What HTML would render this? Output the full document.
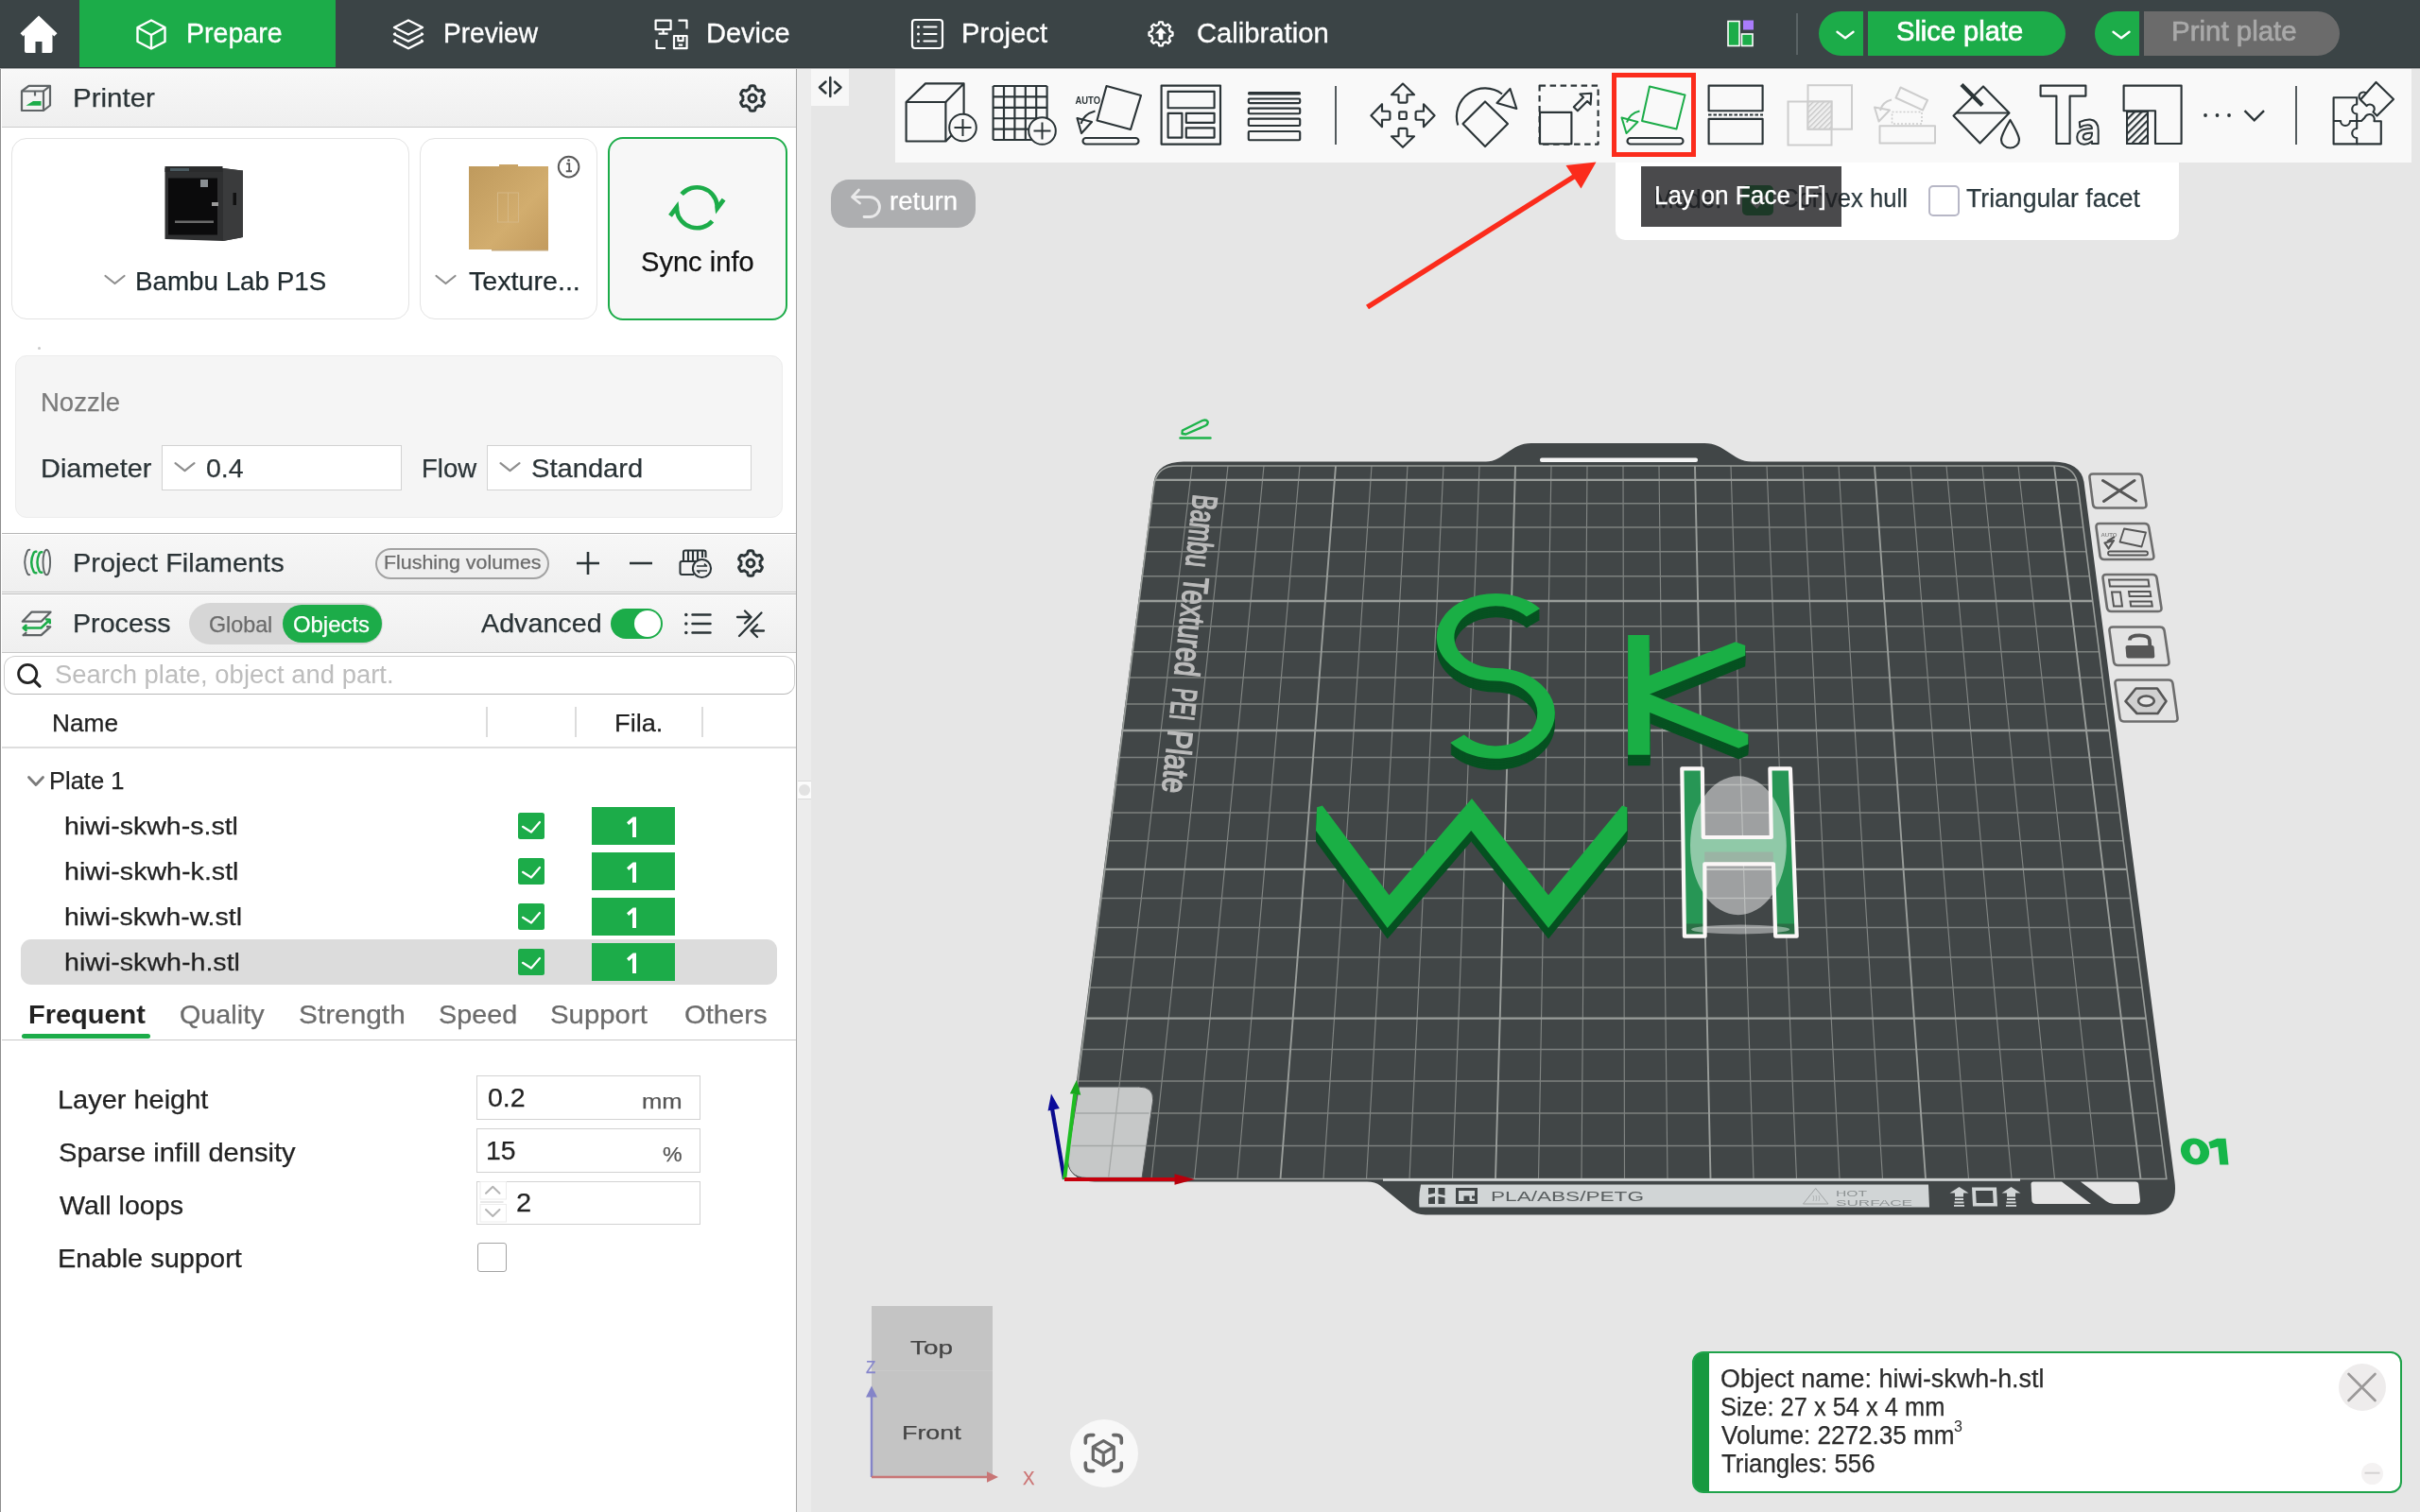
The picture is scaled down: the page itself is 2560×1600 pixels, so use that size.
<!DOCTYPE html>
<html><head><meta charset="utf-8"><title>Bambu Studio</title>
<style>
html,body{margin:0;padding:0;background:#e6e6e6;}
body{width:2560px;height:1600px;position:relative;overflow:hidden;font-family:"Liberation Sans",sans-serif;}
#root{position:absolute;left:0;top:0;width:2560px;height:1600px;overflow:hidden;will-change:transform;}
#root>div{position:absolute;box-sizing:border-box;}
#root>svg{position:absolute;overflow:visible;}
.t{white-space:nowrap;transform-origin:0 0;}
</style></head><body><div id="root">
<div style="left:858px;top:72px;width:1702px;height:1528px;background:#e6e6e6"></div>
<div style="left:843px;top:72px;width:15px;height:1528px;background:#ececec"></div>
<div style="left:947px;top:72px;width:1604px;height:100px;background:#f9f9f9"></div>
<div style="left:858px;top:72px;width:40px;height:40px;background:#f7f7f7"></div>
<div style="left:0px;top:0px;width:2560px;height:72px;background:#3b4446"></div>
<div style="left:84px;top:0px;width:271px;height:71px;background:#1cac49"></div>
<div style="left:1924px;top:12px;width:47px;height:47px;background:#1cac49;border-radius:24px 0 0 24px"></div>
<div style="left:1976px;top:12px;width:209px;height:47px;background:#1cac49;border-radius:0 24px 24px 0"></div>
<div style="left:2216px;top:12px;width:47px;height:47px;background:#1cac49;border-radius:24px 0 0 24px"></div>
<div style="left:2268px;top:12px;width:207px;height:47px;background:#6b6b6b;border-radius:0 24px 24px 0"></div>
<div style="left:1900px;top:14px;width:2px;height:44px;background:#5a6365"></div>
<div style="left:844px;top:826px;width:14px;height:20px;background:#fbfbfb;border-top:1px solid #dcdcdc;border-bottom:1px solid #dcdcdc"></div>
<div style="left:845px;top:830px;width:12px;height:12px;background:#e2e2e2;border-radius:6px"></div>
<div style="left:0px;top:71px;width:2560px;height:1px;background:#343c3e"></div>
<div style="left:0px;top:72px;width:843px;height:1528px;background:#fff"></div>
<div style="left:0px;top:72px;width:1px;height:1528px;background:#8e8e8e"></div>
<div style="left:842px;top:72px;width:1.2px;height:1528px;background:#a6a6a6"></div>
<div style="left:2px;top:72px;width:840px;height:62px;background:linear-gradient(#f8f8f8,#efefef)"></div>
<div style="left:2px;top:134px;width:840px;height:1.2px;background:#cdcdcd"></div>
<div style="left:0px;top:72px;width:2560px;height:1px;background:#a3a6a7"></div>
<div style="left:11.5px;top:145.5px;width:421px;height:192.5px;border:1.5px solid #e3e3e3;border-radius:16px;background:#fff"></div>
<div style="left:443.5px;top:145.5px;width:188.5px;height:192.5px;border:1.5px solid #e3e3e3;border-radius:16px;background:#fff"></div>
<div style="left:643px;top:145px;width:190px;height:194px;border:2px solid #1cac49;border-radius:16px;background:#f7f7f7"></div>
<div style="left:40px;top:367px;width:2.5px;height:2.5px;background:#c8c8c8;border-radius:2px"></div>
<div style="left:16px;top:376px;width:812px;height:171.5px;border:1px solid #ececec;border-radius:12px;background:#f5f5f5"></div>
<div style="left:171px;top:471px;width:254px;height:48px;border:1.5px solid #d2d2d2;background:#fff"></div>
<div style="left:515px;top:471px;width:280px;height:48px;border:1.5px solid #d2d2d2;background:#fff"></div>
<div style="left:2px;top:564px;width:840px;height:1.2px;background:#b6b6b6"></div>
<div style="left:2px;top:565.5px;width:840px;height:61px;background:linear-gradient(#f7f7f7,#efefef)"></div>
<div style="left:2px;top:626px;width:840px;height:1px;background:#c8c8c8"></div>
<div style="left:2px;top:628px;width:840px;height:1.2px;background:#b6b6b6"></div>
<div style="left:397px;top:579.5px;width:183.5px;height:33px;border:2px solid #a2a2a2;border-radius:18px;background:#efefef"></div>
<div style="left:2px;top:629.5px;width:840px;height:60px;background:linear-gradient(#f7f7f7,#efefef)"></div>
<div style="left:2px;top:689.5px;width:840px;height:1.5px;background:#c8c8c8"></div>
<div style="left:200px;top:638px;width:205px;height:43.5px;background:#d6d6d6;border-radius:22px"></div>
<div style="left:299px;top:640px;width:105px;height:40px;background:#1cac49;border-radius:20px"></div>
<div style="left:646px;top:644px;width:55px;height:32px;background:#1cac49;border-radius:16px"></div>
<div style="left:671px;top:646px;width:28px;height:28px;background:#fff;border-radius:14px"></div>
<div style="left:3.5px;top:693.5px;width:837px;height:41px;border:1.5px solid #d0d0d0;border-bottom-color:#b8b8b8;border-radius:12px;background:#fff"></div>
<div style="left:514.25px;top:748px;width:1.5px;height:31.5px;background:#dcdcdc"></div>
<div style="left:608.25px;top:748px;width:1.5px;height:31.5px;background:#dcdcdc"></div>
<div style="left:742.25px;top:748px;width:1.5px;height:31.5px;background:#dcdcdc"></div>
<div style="left:2px;top:790px;width:840px;height:1.5px;background:#dedede"></div>
<div style="left:22px;top:994px;width:800px;height:47.5px;background:#dcdcdc;border-radius:11px"></div>
<div style="left:548px;top:860px;width:28px;height:28px;background:#1cac49;border-radius:2.5px"></div>
<div style="left:626px;top:854px;width:88px;height:40px;background:#1cac49"></div>
<div style="left:548px;top:908px;width:28px;height:28px;background:#1cac49;border-radius:2.5px"></div>
<div style="left:626px;top:902px;width:88px;height:40px;background:#1cac49"></div>
<div style="left:548px;top:956px;width:28px;height:28px;background:#1cac49;border-radius:2.5px"></div>
<div style="left:626px;top:950px;width:88px;height:40px;background:#1cac49"></div>
<div style="left:548px;top:1004px;width:28px;height:28px;background:#1cac49;border-radius:2.5px"></div>
<div style="left:626px;top:998px;width:88px;height:40px;background:#1cac49"></div>
<div style="left:23px;top:1093.5px;width:136px;height:5.5px;background:#1cac49;border-radius:3px"></div>
<div style="left:2px;top:1099.5px;width:840px;height:1.5px;background:#c8c8c8"></div>
<div style="left:503.5px;top:1138px;width:237px;height:46.5px;border:1.5px solid #d2d2d2;background:#fff"></div>
<div style="left:503.5px;top:1194px;width:237px;height:46.5px;border:1.5px solid #d2d2d2;background:#fff"></div>
<div style="left:503.5px;top:1249.5px;width:237px;height:46.5px;border:1.5px solid #d2d2d2;background:#fff"></div>
<div style="left:504.5px;top:1314.5px;width:31px;height:31px;border:1.5px solid #a4a4a4;border-radius:3px;background:#fff"></div>
<div style="left:879px;top:190px;width:153px;height:51px;background:#adaeb0;border-radius:19px"></div>
<div style="left:1709px;top:172px;width:596px;height:82px;background:#fff;border-radius:0 0 10px 10px"></div>
<div style="left:1843px;top:196px;width:33px;height:32px;background:#1cac49;border-radius:5px"></div>
<div style="left:2039.5px;top:196px;width:33px;height:32.5px;border:2px solid #b7b7c6;border-radius:5px;background:#fff"></div>
<div style="left:1789.5px;top:1429.5px;width:751px;height:150px;border:2px solid #1fa34a;border-radius:12px;background:linear-gradient(90deg,#17993f 16.5px,#fff 16.5px)"></div>
<div style="left:2473.5px;top:1443px;width:50px;height:50px;background:#eeecec;border-radius:25px"></div>
<div style="left:2498px;top:1547.5px;width:23px;height:23px;background:#f4f2f2;border-radius:12px"></div>
<div style="left:922px;top:1381.5px;width:128px;height:181.5px;background:#c4c4c4"></div>
<div style="left:922px;top:1449.5px;width:128px;height:1px;background:#cacaca"></div>
<div style="left:1131.5px;top:1501.5px;width:72px;height:72px;background:#f8f8f8;border-radius:36px"></div>
<div style="left:1705px;top:77px;width:89px;height:88.5px;border:5px solid #fb2c1c"></div>
<svg width="2560" height="1600" viewBox="0 0 2560 1600" style="left:0;top:0">
<defs><clipPath id="gclip"><path d="M1245.0,493.0 L2173.8,493.0 Q2195.8,493.0 2198.3,515.0 L2291.8,1247.5 L1127.0,1247.5 L1220.5,515.0 Q1223.0,493.0 1245.0,493.0 Z"/></clipPath></defs>
<path d="M1252,488.5 L1572,488.5 C1590,488.5 1598,469 1620,469 L1803,469 C1825,469 1833,488.5 1853,488.5 L2172,488.5 Q2201,489 2204.5,510 L2300.5,1250 Q2305,1285.5 2270,1285.5 L1508,1285.5 Q1498,1285.5 1490,1279 L1460,1254.5 Q1455,1250.5 1446,1250.5 L1158,1250.5 Q1129,1250.5 1128.8,1222 L1220.5,510 Q1224,489 1252,488.5 Z" fill="#414647"/>
<rect x="1629" y="484.5" width="167" height="4.5" rx="2" fill="#f4f4f4"/>
<g clip-path="url(#gclip)" fill="none"><path d="M1172.5,1247.5L1261.0,493.0M1218.0,1247.5L1299.0,493.0M1263.5,1247.5L1337.0,493.0M1309.0,1247.5L1375.0,493.0M1400.0,1247.5L1451.0,493.0M1445.5,1247.5L1489.0,493.0M1491.0,1247.5L1527.0,493.0M1536.5,1247.5L1565.0,493.0M1627.5,1247.5L1641.0,493.0M1673.0,1247.5L1679.0,493.0M1718.5,1247.5L1717.0,493.0M1764.0,1247.5L1755.0,493.0M1855.0,1247.5L1831.0,493.0M1900.5,1247.5L1869.0,493.0M1946.0,1247.5L1907.0,493.0M1991.5,1247.5L1945.0,493.0M2082.5,1247.5L2021.0,493.0M2128.0,1247.5L2059.0,493.0M2173.5,1247.5L2097.0,493.0M2219.0,1247.5L2135.0,493.0" stroke="#818583" stroke-width="1.15"/><path d="M1131.5,1212.5L2287.3,1212.5M1135.8,1178.0L2283.0,1178.0M1140.2,1144.0L2278.6,1144.0M1144.4,1110.6L2274.4,1110.6M1152.8,1045.1L2266.0,1045.1M1156.8,1013.1L2262.0,1013.1M1160.8,981.6L2258.0,981.6M1164.8,950.5L2254.0,950.5M1172.5,889.7L2246.3,889.7M1176.3,859.9L2242.5,859.9M1180.1,830.5L2238.7,830.5M1183.7,801.6L2235.1,801.6M1191.0,744.9L2227.8,744.9M1194.5,717.1L2224.3,717.1M1198.0,689.7L2220.8,689.7M1201.4,662.7L2217.4,662.7M1208.2,609.7L2210.6,609.7M1211.5,583.7L2207.3,583.7M1214.7,558.1L2204.1,558.1M1217.9,532.8L2200.9,532.8" stroke="#7d817f" stroke-width="1.5"/><path d="M1354.5,1247.5L1413.0,493.0M1582.0,1247.5L1603.0,493.0M1809.5,1247.5L1793.0,493.0M2037.0,1247.5L1983.0,493.0M2264.5,1247.5L2173.0,493.0" stroke="#999d9a" stroke-width="1.9"/><path d="M1148.6,1077.6L2270.2,1077.6M1168.7,919.9L2250.1,919.9M1187.4,773.0L2231.4,773.0M1204.8,636.0L2214.0,636.0M1221.1,507.9L2197.7,507.9" stroke="#999d9a" stroke-width="2.3"/></g>
<path d="M1245.0,493.0 L2173.8,493.0 Q2195.8,493.0 2198.3,515.0 L2291.8,1247.5 L1127.0,1247.5 L1220.5,515.0 Q1223.0,493.0 1245.0,493.0 Z" fill="none" stroke="#9a9e9b" stroke-width="1.6"/>
<rect x="1463" y="1247.2" width="674" height="2.6" fill="#d4d7d7"/>
<path d="M1149.2,1246.3 L1208.1,1246.3 L1219.7,1164.1 Q1220.2,1150.1 1204.7,1150.1 L1141.4,1150.1 L1129.2,1224.3 Q1129.2,1246.3 1149.2,1246.3 Z" fill="#c6c8c8" stroke="#55595a" stroke-width="1"/><path d="M1133.5,1212.5L1211.8,1212.5M1137.9,1178.0L1215.6,1178.0M1172.7,1245.7L1183.9,1150.1" stroke="#a4a7a6" stroke-width="1.3" fill="none"/>
<path d="M1503,1253.5 L2040,1253.5 L2041,1277.5 L1501.5,1277.5 Q1500.5,1265 1503,1253.5 Z" fill="#d1d5d6"/>
<g fill="#414647"><path d="M1511,1257 h7 v5.5 l-7,1.5 z M1521.5,1257 h7 v8 l-7,-1.5 z M1511,1267.5 l7,-1.5 v8 h-7 z M1521.5,1266 l7,1.5 v6.5 h-7 z"/><path d="M1540,1257 h23 v17 h-23 z M1543,1260 v11 h5.5 v-5.5 h6 v5.5 h5.5 v-2.5 h-3 v-3 h3 v-5.5 z" fill-rule="evenodd"/></g><text x="1577" y="1271.2" font-family="Liberation Sans,sans-serif" font-size="14.5" fill="#5a5f60" textLength="162" lengthAdjust="spacingAndGlyphs">PLA/ABS/PETG</text>
<path d="M1920.7,1257.5 L1934,1274 L1907.5,1274 Z" fill="none" stroke="#a0a4a5" stroke-width="1"/><path d="M1918,1271 q1.5,-3 0,-6 M1921,1271 q1.5,-3 0,-6 M1924,1271 q1.5,-3 0,-6" fill="none" stroke="#a8acad" stroke-width="0.8"/><text x="1942" y="1265.5" font-family="Liberation Sans,sans-serif" font-size="9.5" fill="#8d9293" textLength="33" lengthAdjust="spacingAndGlyphs">HOT</text><text x="1942" y="1275.5" font-family="Liberation Sans,sans-serif" font-size="9.5" fill="#8d9293" textLength="81" lengthAdjust="spacingAndGlyphs">SURFACE</text>
<g fill="#d1d5d6"><path d="M2072.5,1256 l10,6.5 h-5.5 v4 h-9 v-4 h-5.5 z"/><rect x="2068.0" y="1268" width="9" height="2"/><rect x="2067.5" y="1271.5" width="10" height="2"/><rect x="2067.0" y="1275" width="11" height="1.8"/><path d="M2127.5,1256 l10,6.5 h-5.5 v4 h-9 v-4 h-5.5 z"/><rect x="2123.0" y="1268" width="9" height="2"/><rect x="2122.5" y="1271.5" width="10" height="2"/><rect x="2122.0" y="1275" width="11" height="1.8"/><path d="M2086,1256.5 h26 l1,20 h-26 z M2090,1260 l0.7,13 h18 l-0.7,-13 z" fill-rule="evenodd"/></g>
<path d="M2151,1250.5 L2181,1250.5 L2212,1274 L2154,1274 Q2149.5,1274 2149.3,1270 L2148.5,1253 Q2148.5,1250.5 2151,1250.5 Z" fill="#e6e6e6"/><path d="M2201,1250.5 L2259,1250.5 Q2262,1250.5 2262.3,1253 L2264,1270 Q2264,1274 2260,1274 L2236,1274 Q2231,1273.5 2228,1271 Z" fill="#e6e6e6"/>
<g transform="translate(1262.5,522) rotate(96.0)" font-family="Liberation Sans,sans-serif" font-size="37" fill="#bbbbbb" stroke="#bbbbbb" stroke-width="1.5"><text x="0.6" y="0" textLength="76.6" lengthAdjust="spacingAndGlyphs">Bambu</text><text x="88.0" y="0" textLength="105.4" lengthAdjust="spacingAndGlyphs">Textured</text><text x="206.5" y="0" textLength="33.5" lengthAdjust="spacingAndGlyphs">PEI</text><text x="250.8" y="0" textLength="67.1" lengthAdjust="spacingAndGlyphs">Plate</text></g>
<g transform="translate(0,12) scale(1,0.72)"><path d="M1622,900.3 A53,54.9 0 1 0 1582,991.3 A53.5,57.2 0 1 1 1541.5,1085.8" fill="none" stroke="#065121" stroke-width="18.6"/></g><g transform="translate(0,10) scale(1,0.72)"><path d="M1622,900.3 A53,54.9 0 1 0 1582,991.3 A53.5,57.2 0 1 1 1541.5,1085.8" fill="none" stroke="#065121" stroke-width="18.6"/></g><g transform="translate(0,8) scale(1,0.72)"><path d="M1622,900.3 A53,54.9 0 1 0 1582,991.3 A53.5,57.2 0 1 1 1541.5,1085.8" fill="none" stroke="#065121" stroke-width="18.6"/></g><g transform="translate(0,6) scale(1,0.72)"><path d="M1622,900.3 A53,54.9 0 1 0 1582,991.3 A53.5,57.2 0 1 1 1541.5,1085.8" fill="none" stroke="#065121" stroke-width="18.6"/></g><g transform="translate(0,4) scale(1,0.72)"><path d="M1622,900.3 A53,54.9 0 1 0 1582,991.3 A53.5,57.2 0 1 1 1541.5,1085.8" fill="none" stroke="#065121" stroke-width="18.6"/></g><g transform="translate(0,2) scale(1,0.72)"><path d="M1622,900.3 A53,54.9 0 1 0 1582,991.3 A53.5,57.2 0 1 1 1541.5,1085.8" fill="none" stroke="#065121" stroke-width="18.6"/></g><g transform="translate(0,0) scale(1,0.72)"><path d="M1622,900.3 A53,54.9 0 1 0 1582,991.3 A53.5,57.2 0 1 1 1541.5,1085.8" fill="none" stroke="#1aaf45" stroke-width="18.6"/></g>
<polygon points="1722.1,683.6 1744.7,683.6 1745.5,810.3 1722.1,810.3" fill="#065121" /><polygon points="1744.0,726.8 1835.8,690.9 1846.2,694.6 1846.2,705.3 1744.0,746.6" fill="#065121" /><polygon points="1744.0,745.6 1849.3,788.6 1849.3,799.0 1839.2,803.4 1744.0,765.2" fill="#065121" /><polygon points="1722.1,681.6 1744.7,681.6 1745.5,808.3 1722.1,808.3" fill="#065121" /><polygon points="1744.0,724.8 1835.8,688.9 1846.2,692.6 1846.2,703.3 1744.0,744.6" fill="#065121" /><polygon points="1744.0,743.6 1849.3,786.6 1849.3,797.0 1839.2,801.4 1744.0,763.2" fill="#065121" /><polygon points="1722.1,679.6 1744.7,679.6 1745.5,806.3 1722.1,806.3" fill="#065121" /><polygon points="1744.0,722.8 1835.8,686.9 1846.2,690.6 1846.2,701.3 1744.0,742.6" fill="#065121" /><polygon points="1744.0,741.6 1849.3,784.6 1849.3,795.0 1839.2,799.4 1744.0,761.2" fill="#065121" /><polygon points="1722.1,677.6 1744.7,677.6 1745.5,804.3 1722.1,804.3" fill="#065121" /><polygon points="1744.0,720.8 1835.8,684.9 1846.2,688.6 1846.2,699.3 1744.0,740.6" fill="#065121" /><polygon points="1744.0,739.6 1849.3,782.6 1849.3,793.0 1839.2,797.4 1744.0,759.2" fill="#065121" /><polygon points="1722.1,675.6 1744.7,675.6 1745.5,802.3 1722.1,802.3" fill="#065121" /><polygon points="1744.0,718.8 1835.8,682.9 1846.2,686.6 1846.2,697.3 1744.0,738.6" fill="#065121" /><polygon points="1744.0,737.6 1849.3,780.6 1849.3,791.0 1839.2,795.4 1744.0,757.2" fill="#065121" /><polygon points="1722.1,673.6 1744.7,673.6 1745.5,800.3 1722.1,800.3" fill="#065121" /><polygon points="1744.0,716.8 1835.8,680.9 1846.2,684.6 1846.2,695.3 1744.0,736.6" fill="#065121" /><polygon points="1744.0,735.6 1849.3,778.6 1849.3,789.0 1839.2,793.4 1744.0,755.2" fill="#065121" /><polygon points="1722.1,672.0 1744.7,672.0 1745.5,798.7 1722.1,798.7" fill="#1aaf45" /><polygon points="1744.0,715.2 1835.8,679.3 1846.2,683.0 1846.2,693.7 1744.0,735.0" fill="#1aaf45" /><polygon points="1744.0,734.0 1849.3,777.0 1849.3,787.4 1839.2,791.8 1744.0,753.6" fill="#1aaf45" />
<polygon points="1393.1,865.8 1398.9,864.0 1469.5,958.9 1557.0,856.6 1638.0,958.9 1716.0,864.0 1721.3,865.8 1721.3,890.6 1638.0,993.6 1556.3,890.6 1467.7,993.6 1392.0,890.6" fill="#065121" /><polygon points="1393.1,863.8 1398.9,862.0 1469.5,956.9 1557.0,854.6 1638.0,956.9 1716.0,862.0 1721.3,863.8 1721.3,888.6 1638.0,991.6 1556.3,888.6 1467.7,991.6 1392.0,888.6" fill="#065121" /><polygon points="1393.1,861.8 1398.9,860.0 1469.5,954.9 1557.0,852.6 1638.0,954.9 1716.0,860.0 1721.3,861.8 1721.3,886.6 1638.0,989.6 1556.3,886.6 1467.7,989.6 1392.0,886.6" fill="#065121" /><polygon points="1393.1,859.8 1398.9,858.0 1469.5,952.9 1557.0,850.6 1638.0,952.9 1716.0,858.0 1721.3,859.8 1721.3,884.6 1638.0,987.6 1556.3,884.6 1467.7,987.6 1392.0,884.6" fill="#065121" /><polygon points="1393.1,857.8 1398.9,856.0 1469.5,950.9 1557.0,848.6 1638.0,950.9 1716.0,856.0 1721.3,857.8 1721.3,882.6 1638.0,985.6 1556.3,882.6 1467.7,985.6 1392.0,882.6" fill="#065121" /><polygon points="1393.1,855.8 1398.9,854.0 1469.5,948.9 1557.0,846.6 1638.0,948.9 1716.0,854.0 1721.3,855.8 1721.3,880.6 1638.0,983.6 1556.3,880.6 1467.7,983.6 1392.0,880.6" fill="#065121" /><polygon points="1393.1,854.2 1398.9,852.4 1469.5,947.3 1557.0,845.0 1638.0,947.3 1716.0,852.4 1721.3,854.2 1721.3,879.0 1638.0,982.0 1556.3,879.0 1467.7,982.0 1392.0,879.0" fill="#1aaf45" />
<polygon points="1779.3,813.3 1800.8,813.3 1801.8,886.0 1873.8,886.0 1872.4,813.3 1893.9,813.3 1900.7,990.7 1878.2,990.7 1876.0,914.4 1803.3,914.4 1803.6,990.7 1781.9,990.7" fill="#279655"/><polygon points="1803.2,901.5 1875.6,901.5 1876,914.4 1803.3,914.4" fill="#3a6c4e"/><polygon points="1781.7,977.6 1803.6,977.6 1803.6,990.7 1781.9,990.7" fill="#2a6f45"/><polygon points="1877.8,977.6 1900.2,977.6 1900.7,990.7 1878.2,990.7" fill="#2a6f45"/><ellipse cx="1838.9" cy="894.7" rx="50.9" ry="73.5" fill="rgba(255,255,255,0.49)"/><ellipse cx="1841.1" cy="983.5" rx="52" ry="4.9" fill="rgba(255,255,255,0.42)"/><polygon points="1779.3,813.3 1800.8,813.3 1801.8,886.0 1873.8,886.0 1872.4,813.3 1893.9,813.3 1900.7,990.7 1878.2,990.7 1876.0,914.4 1803.3,914.4 1803.6,990.7 1781.9,990.7" fill="none" stroke="#fbf7f7" stroke-width="4.2" stroke-linejoin="round"/>
<g stroke-linecap="butt"><line x1="1126" y1="1248" x2="1112.8" y2="1172" stroke="#0b0b8e" stroke-width="4.2"/><polygon points="1112,1157.5 1120.8,1173 1108.5,1175.5" fill="#0b0b9a"/><line x1="1126" y1="1248" x2="1137.2" y2="1158" stroke="#1fbe22" stroke-width="4.2"/><polygon points="1138.9,1143 1143.3,1158.8 1131.8,1157.3" fill="#18a81c"/><line x1="1126" y1="1248" x2="1244" y2="1248" stroke="#c6000c" stroke-width="4.2"/><polygon points="1264,1248 1242.5,1242.3 1242.5,1253.7" fill="#b8000c"/></g>
<g fill="#16b64a" transform="translate(2332,1218.5) skewX(6) translate(-2332,-1218.5)"><path fill-rule="evenodd" d="M2307,1218.5 A15,14 0 1 0 2337,1218.5 A15,14 0 1 0 2307,1218.5 Z M2316.5,1218.5 A5.5,7.7 0 1 1 2327.5,1218.5 A5.5,7.7 0 1 1 2316.5,1218.5 Z"/><path d="M2346.8,1204.8 H2356 V1232.4 H2346.8 V1213.4 L2338.6,1215.6 L2337.4,1208.6 Z"/></g>
<g fill="none" stroke="#1cb34a" stroke-width="2.4" stroke-linecap="round" stroke-linejoin="round"><path d="M1250.5,459 L1250.8,455.5 L1272,445 Q1276,443.5 1277.5,446 Q1278.5,448.5 1275,450.5 L1254.5,459.5 Z"/><path d="M1248.5,463.5 H1280.5"/></g>
</svg>
<svg width="2560" height="1600" viewBox="0 0 2560 1600" style="left:0;top:0">
<path d="M873.5,86.5 L867,92.5 L873.5,98.5 M878.3,82 V102  M883,86.5 L889.5,92.5 L883,98.5" fill="none" stroke="#2b3437" stroke-width="2.5" stroke-linejoin="round" stroke-linecap="round"/><g fill="none" stroke="#2b3437" stroke-width="2.15" stroke-linejoin="round"><rect x="958.6" y="108" width="41.8" height="41.5"/><path d="M958.6,108 L979,88.4 H1019.6 L1000.4,108 M1019.6,88.4 V130 M1000.4,149.5 L1019.6,130"/></g><circle cx="1018.5" cy="135" r="14.3" fill="#f9f9f9" stroke="#2b3437" stroke-width="2"/><path d="M1009.5,135 H1027.5 M1018.5,126 V144" stroke="#2b3437" stroke-width="2" fill="none"/><path d="M1050.6,91 V148M1050.6,91.0 H1107.6M1062.0,91 V148M1050.6,102.4 H1107.6M1073.4,91 V148M1050.6,113.8 H1107.6M1084.8,91 V148M1050.6,125.2 H1107.6M1096.2,91 V148M1050.6,136.6 H1107.6M1107.6,91 V148M1050.6,148.0 H1107.6" fill="none" stroke="#2b3437" stroke-width="2.15" stroke-linejoin="round"/><circle cx="1102.5" cy="138.5" r="14.3" fill="#f9f9f9" stroke="#2b3437" stroke-width="2"/><path d="M1093.5,138.5 H1111.5 M1102.5,129.5 V147.5" stroke="#2b3437" stroke-width="2" fill="none"/><g fill="none" stroke="#2b3437" stroke-width="2.15" stroke-linejoin="round"><path d="M1170.5,91 L1207,101 L1196,137 L1160.5,127.5 Z"/><path d="M1158.5,117.5 Q1146,121 1143.5,131"/><path d="M1139.5,125 L1155,129 L1144,141 Z"/><rect x="1145.5" y="146" width="59" height="6.5" rx="3.2"/></g><text x="1137.5" y="109.5" font-family="Liberation Sans,sans-serif" font-weight="bold" font-size="11.5" fill="#2b3437" textLength="26.5" lengthAdjust="spacingAndGlyphs">AUTO</text><g fill="none" stroke="#2b3437" stroke-width="2.15" stroke-linejoin="round"><rect x="1228.6" y="90.6" width="62.4" height="62"/><rect x="1235.6" y="96.8" width="49" height="17.4"/><rect x="1235.6" y="119.8" width="14.8" height="25.8"/><rect x="1254.8" y="119.8" width="29.8" height="10"/><rect x="1254.8" y="135.4" width="29.8" height="10.2"/></g><rect x="1320" y="97" width="56" height="3.6" rx="1.5" fill="#2b3437"/><g fill="none" stroke="#2b3437" stroke-width="2.15" stroke-linejoin="round"><rect x="1320.8" y="104.5" width="54.4" height="4.6" rx="1"/><rect x="1320.8" y="114.6" width="54.4" height="5.6" rx="1"/><rect x="1320.8" y="125.6" width="54.4" height="7.4" rx="1"/><rect x="1320.8" y="139" width="54.4" height="9.2" rx="1"/></g><path d="M1413,91 V153 M2429,91 V153" stroke="#2b3437" stroke-width="1.6"/><path d="M1484,88.6 L1496,100.2 L1488.5,100.2 L1488.5,107 Q1488.5,108.6 1487,108.6 L1481,108.6 Q1479.5,108.6 1479.5,107 L1479.5,100.2 L1472,100.2 Z" transform="rotate(0 1484 122.2)" fill="none" stroke="#2b3437" stroke-width="2.15" stroke-linejoin="round"/><path d="M1484,88.6 L1496,100.2 L1488.5,100.2 L1488.5,107 Q1488.5,108.6 1487,108.6 L1481,108.6 Q1479.5,108.6 1479.5,107 L1479.5,100.2 L1472,100.2 Z" transform="rotate(90 1484 122.2)" fill="none" stroke="#2b3437" stroke-width="2.15" stroke-linejoin="round"/><path d="M1484,88.6 L1496,100.2 L1488.5,100.2 L1488.5,107 Q1488.5,108.6 1487,108.6 L1481,108.6 Q1479.5,108.6 1479.5,107 L1479.5,100.2 L1472,100.2 Z" transform="rotate(180 1484 122.2)" fill="none" stroke="#2b3437" stroke-width="2.15" stroke-linejoin="round"/><path d="M1484,88.6 L1496,100.2 L1488.5,100.2 L1488.5,107 Q1488.5,108.6 1487,108.6 L1481,108.6 Q1479.5,108.6 1479.5,107 L1479.5,100.2 L1472,100.2 Z" transform="rotate(270 1484 122.2)" fill="none" stroke="#2b3437" stroke-width="2.15" stroke-linejoin="round"/><rect x="1480.2" y="118.4" width="7.6" height="7.6" rx="1" fill="none" stroke="#2b3437" stroke-width="2.15" stroke-linejoin="round"/><g fill="none" stroke="#2b3437" stroke-width="2.15" stroke-linejoin="round"><path d="M1571,107.5 L1595,131 L1571,155 L1547.5,131 Z"/><path d="M1542.3,132.5 A30,30 0 0 1 1589,99.5"/><path d="M1597.5,94 L1604.3,115 L1583.5,109 Z"/></g><g fill="none" stroke="#2b3437" stroke-width="2.15" stroke-linejoin="round"><rect x="1628.6" y="90.6" width="62" height="62" stroke-dasharray="6.5 4.5"/><rect x="1629" y="118.8" width="33.4" height="33.4" fill="#f9f9f9"/><path d="M1664.8,113.2 L1675,103 L1671.5,99.5 L1683.3,98.8 L1682.6,110.6 L1679.1,107.1 L1668.9,117.3 Z"/></g><g fill="none" stroke="#1cac49" stroke-width="2" stroke-linejoin="round"><path d="M1745,91.5 L1782.5,100.5 L1773.5,136.5 L1737,128 Z"/><path d="M1734.5,117.5 Q1724,120 1721,129.5"/><path d="M1715.5,124.5 L1732.5,129 L1720.5,141 Z"/></g><rect x="1721.5" y="146" width="59" height="6.5" rx="3.2" fill="none" stroke="#2b3437" stroke-width="2.15" stroke-linejoin="round"/><g fill="none" stroke="#2b3437" stroke-width="2.15" stroke-linejoin="round"><rect x="1807.6" y="90.6" width="57" height="26.6"/><rect x="1807.6" y="125.8" width="57" height="26.4"/><path d="M1807,121.5 H1865" stroke-dasharray="3.5 2"/></g><defs><pattern id="h1" width="4" height="4" patternUnits="userSpaceOnUse" patternTransform="rotate(45)"><rect width="4" height="4" fill="#f0f0f0"/><rect width="1.3" height="4" fill="#c4c4c4"/></pattern><pattern id="h2" width="5.4" height="5.4" patternUnits="userSpaceOnUse" patternTransform="rotate(45)"><rect width="5.4" height="5.4" fill="#f9f9f9"/><rect width="2.1" height="5.4" fill="#2b3437"/></pattern><linearGradient id="pg" x1="0" y1="0" x2="1" y2="1"><stop offset="0" stop-color="#bf9a5d"/><stop offset="0.6" stop-color="#d2ad6e"/><stop offset="1" stop-color="#c39b5e"/></linearGradient></defs><g fill="none" stroke="#cdcdcd" stroke-width="2"><rect x="1912.5" y="90.2" width="46.5" height="46.5"/><rect x="1891.5" y="107.5" width="46" height="46"/><rect x="1912.5" y="107.5" width="25" height="29.2" fill="url(#h1)"/></g><g fill="none" stroke="#cdcdcd" stroke-width="2" stroke-linejoin="round"><rect x="1988.5" y="133.2" width="58.5" height="18.3"/><rect x="2001.5" y="118.5" width="31.5" height="12.5" stroke-dasharray="2 2" stroke-width="1.6"/><path d="M2010.5,92.5 L2039,106 L2034,116.5 L2005.5,103.5 Z"/><path d="M2001,105.5 Q1991,108 1989,117"/><path d="M1983,113.5 L1999,116.5 L1987.5,128.5 Z"/></g><g fill="none" stroke="#2b3437" stroke-width="2.15" stroke-linejoin="round"><path d="M2098,91.5 L2125.5,119.5 L2094.5,151.5 L2066.5,122.5 Z"/><path d="M2069.5,119.5 H2125.5"/><path d="M2126.5,127 Q2117,143 2117,148 A9.5,8.5 0 0 0 2136,148 Q2136,143 2126.5,127 Z"/></g><path d="M2075,89.5 L2097,111.5" stroke="#2b3437" stroke-width="4.4" stroke-linecap="butt"/><path d="M2158.6,90.6 H2206.4 V101.6 H2189.6 V152 H2175.4 V101.6 H2158.6 Z" fill="none" stroke="#2b3437" stroke-width="2.15" stroke-linejoin="round"/><path d="M2199.8,129.2 Q2206,126.3 2211,126.6 Q2219.6,127.4 2219.7,138 V152 H2213 V149.6 Q2209,153 2204.5,152.8 Q2197.2,152.3 2197.2,145 Q2197.2,137.6 2207,136.6 L2213,135.9 Q2213,132.2 2208.6,132.2 Q2204.2,132.2 2200.3,134.8 Z M2213,140.6 L2208.2,141.1 Q2203.6,141.8 2203.6,144.8 Q2203.6,147.7 2207,147.7 Q2213,147.4 2213,141.6 Z" fill="#f9f9f9" fill-rule="evenodd" stroke="#2b3437" stroke-width="2" stroke-linejoin="round"/><path d="M2246.6,90.6 H2307.6 V152 H2280 V117.2 H2246.6 Z" fill="none" stroke="#2b3437" stroke-width="2.15" stroke-linejoin="round"/><rect x="2250" y="118.2" width="22" height="33.8" fill="url(#h2)" stroke="#2b3437" stroke-width="2"/><circle cx="2333" cy="122" r="1.9" fill="#2b3437"/><circle cx="2345.5" cy="122" r="1.9" fill="#2b3437"/><circle cx="2358" cy="122" r="1.9" fill="#2b3437"/><path d="M2374.5,117.2 L2384.7,127.4 L2395,117.2" fill="none" stroke="#2b3437" stroke-width="2.4"/><g fill="none" stroke="#2b3437" stroke-width="2.15" stroke-linejoin="round"><path d="M2468.6,128 V103.2 H2493.2 V110.5 A5,5 0 1 0 2493.2,120.5 V128"/><path d="M2468.6,128 V152.4 H2493.2 V146 A5,5 0 1 1 2493.2,136 V128 H2486 A5,5 0 1 1 2476,128 H2468.6"/><path d="M2493.2,152.4 H2518.8 V128.2 H2511.5 A5,5 0 1 0 2501.5,124.5 L2498,128 H2493.2"/><path d="M2497,105.5 L2513.5,87 L2532,105 L2514.5,122.5 L2510.5,118.5 A4.6,4.6 0 1 0 2503.5,112 Z M2497,105.5 A4.6,4.6 0 1 1 2503.5,99"/></g>
<path d="M41,16.5 L60.5,35.2 L57.3,38.5 L55.5,36.8 V54 Q55.5,56 53.5,56 H44.5 V44 H37.5 V56 H28 Q26,56 26,54 V36.8 L24.7,38.5 L21.5,35.2 Z" fill="#fff"/><g fill="none" stroke="#fff" stroke-width="2.4" stroke-linejoin="round"><path d="M160,21.5 L174.5,29 V44 L160,51.5 L145.5,44 V29 Z"/><path d="M145.5,29 L160,37 L174.5,29 M160,37 V51.5"/></g><g fill="none" stroke="#fff" stroke-width="2.4" stroke-linejoin="round" stroke-linecap="round"><path d="M432,21.5 L447,29 L432,36.5 L417,29 Z"/><path d="M418,35.5 L417,36.3 L432,43.8 L447,36.3 L446,35.5"/><path d="M418,42.8 L417,43.6 L432,51.2 L447,43.6 L446,42.8"/></g><g fill="none" stroke="#fff" stroke-width="2.2" stroke-linejoin="round"><rect x="693.6" y="21.6" width="16" height="9.6"/><path d="M701.6,31.2 V35.6 M696.6,35.6 H706.6"/><path d="M717.5,21.6 H726.5 V30.5"/><path d="M694.6,42 V51 H704"/><rect x="713" y="38" width="13.6" height="13.2"/><path d="M717.4,38 V43.2 H722.6 V38 M717.8,47.6 H722.2"/></g><g fill="none" stroke="#fff" stroke-width="2.2"><rect x="965" y="21" width="32" height="30" rx="3"/><path d="M977.5,28.5 H990.5 M977.5,36 H990.5 M977.5,43.5 H990.5" stroke-linecap="round"/></g><circle cx="971.5" cy="28.5" r="1.5" fill="#fff"/><circle cx="971.5" cy="36" r="1.5" fill="#fff"/><circle cx="971.5" cy="43.5" r="1.5" fill="#fff"/><path d="M1225.6,26.0 L1226.2,23.3 L1229.8,23.3 L1230.4,26.0 L1233.3,27.2 L1235.6,25.7 L1238.1,28.2 L1236.6,30.5 L1237.8,33.4 L1240.5,34.0 L1240.5,37.6 L1237.8,38.2 L1236.6,41.1 L1238.1,43.4 L1235.6,45.9 L1233.3,44.4 L1230.4,45.6 L1229.8,48.3 L1226.2,48.3 L1225.6,45.6 L1222.7,44.4 L1220.4,45.9 L1217.9,43.4 L1219.4,41.1 L1218.2,38.2 L1215.5,37.6 L1215.5,34.0 L1218.2,33.4 L1219.4,30.5 L1217.9,28.2 L1220.4,25.7 L1222.7,27.2Z" fill="none" stroke="#fff" stroke-width="2.3" stroke-linejoin="round"/><circle cx="1228" cy="35.8" r="0.01" fill="none" stroke="#fff" stroke-width="2.3"/><path d="M1228,29 L1234,35.5 H1230.3 V42 H1225.7 V35.5 H1222 Z" fill="#fff"/><rect x="1828" y="22.5" width="12" height="26" fill="#1cac49" stroke="#fff" stroke-width="1.6"/><rect x="1842.5" y="36" width="11.5" height="12.5" fill="#1cac49" stroke="#fff" stroke-width="1.6"/><rect x="1844" y="21.5" width="11" height="10" fill="#a97cfb"/><path d="M1943.5,33.8 L1952.0,40.2 L1960.5,33.8" fill="none" stroke="#fff" stroke-width="2.4" stroke-linecap="round" stroke-linejoin="round"/><path d="M2235.5,33.8 L2244.0,40.2 L2252.5,33.8" fill="none" stroke="#fff" stroke-width="2.4" stroke-linecap="round" stroke-linejoin="round"/>
<g fill="none" stroke="#5f6466" stroke-width="2.2" stroke-linejoin="round"><rect x="23" y="96.5" width="23" height="20.5"/><path d="M23,96.5 L30.5,90.8 H53 V111.5 L46,117 M46,96.5 L53,90.8"/><path d="M37,97 V101.5"/></g><path d="M27.5,111.8 L35,107 H43.5 V111.8 Z" fill="#1cac49"/><path d="M796.00,90.80 L796.58,90.81 L797.15,90.85 L797.72,90.91 L798.29,91.00 L798.73,91.67 L799.02,92.72 L799.23,93.76 L799.48,94.45 L799.89,94.61 L800.30,94.79 L800.69,94.98 L801.08,95.20 L801.46,95.43 L801.83,95.67 L802.19,95.94 L802.53,96.21 L803.26,96.08 L804.26,95.74 L805.31,95.47 L806.11,95.52 L806.47,95.96 L806.81,96.43 L807.13,96.91 L807.43,97.40 L807.71,97.90 L807.96,98.42 L808.20,98.95 L808.40,99.49 L808.04,100.20 L807.28,100.98 L806.48,101.68 L806.01,102.24 L806.08,102.67 L806.13,103.11 L806.15,103.56 L806.16,104.00 L806.15,104.44 L806.13,104.89 L806.08,105.33 L806.01,105.76 L806.48,106.32 L807.28,107.02 L808.04,107.80 L808.40,108.51 L808.20,109.05 L807.96,109.58 L807.71,110.10 L807.43,110.60 L807.13,111.09 L806.81,111.57 L806.47,112.04 L806.11,112.48 L805.31,112.53 L804.26,112.26 L803.26,111.92 L802.53,111.79 L802.19,112.06 L801.83,112.33 L801.46,112.57 L801.08,112.80 L800.69,113.02 L800.30,113.21 L799.89,113.39 L799.48,113.55 L799.23,114.24 L799.02,115.28 L798.73,116.33 L798.29,117.00 L797.72,117.09 L797.15,117.15 L796.58,117.19 L796.00,117.20 L795.42,117.19 L794.85,117.15 L794.28,117.09 L793.71,117.00 L793.27,116.33 L792.98,115.28 L792.77,114.24 L792.52,113.55 L792.11,113.39 L791.70,113.21 L791.31,113.02 L790.92,112.80 L790.54,112.57 L790.17,112.33 L789.81,112.06 L789.47,111.79 L788.74,111.92 L787.74,112.26 L786.69,112.53 L785.89,112.48 L785.53,112.04 L785.19,111.57 L784.87,111.09 L784.57,110.60 L784.29,110.10 L784.04,109.58 L783.80,109.05 L783.60,108.51 L783.96,107.80 L784.72,107.02 L785.52,106.32 L785.99,105.76 L785.92,105.33 L785.87,104.89 L785.85,104.44 L785.84,104.00 L785.85,103.56 L785.87,103.11 L785.92,102.67 L785.99,102.24 L785.52,101.68 L784.72,100.98 L783.96,100.20 L783.60,99.49 L783.80,98.95 L784.04,98.42 L784.29,97.90 L784.57,97.40 L784.87,96.91 L785.19,96.43 L785.53,95.96 L785.89,95.52 L786.69,95.47 L787.74,95.74 L788.74,96.08 L789.47,96.21 L789.81,95.94 L790.17,95.67 L790.54,95.43 L790.92,95.20 L791.31,94.98 L791.70,94.79 L792.11,94.61 L792.52,94.45 L792.77,93.76 L792.98,92.72 L793.27,91.67 L793.71,91.00 L794.28,90.91 L794.85,90.85 L795.42,90.81Z" fill="none" stroke="#2b3437" stroke-width="3.0" stroke-linejoin="round"/><circle cx="796" cy="104" r="3.9599999999999995" fill="none" stroke="#2b3437" stroke-width="3.0"/><path d="M794.00,582.80 L794.58,582.81 L795.15,582.85 L795.72,582.91 L796.29,583.00 L796.73,583.67 L797.02,584.72 L797.23,585.76 L797.48,586.45 L797.89,586.61 L798.30,586.79 L798.69,586.98 L799.08,587.20 L799.46,587.43 L799.83,587.67 L800.19,587.94 L800.53,588.21 L801.26,588.08 L802.26,587.74 L803.31,587.47 L804.11,587.52 L804.47,587.96 L804.81,588.43 L805.13,588.91 L805.43,589.40 L805.71,589.90 L805.96,590.42 L806.20,590.95 L806.40,591.49 L806.04,592.20 L805.28,592.98 L804.48,593.68 L804.01,594.24 L804.08,594.67 L804.13,595.11 L804.15,595.56 L804.16,596.00 L804.15,596.44 L804.13,596.89 L804.08,597.33 L804.01,597.76 L804.48,598.32 L805.28,599.02 L806.04,599.80 L806.40,600.51 L806.20,601.05 L805.96,601.58 L805.71,602.10 L805.43,602.60 L805.13,603.09 L804.81,603.57 L804.47,604.04 L804.11,604.48 L803.31,604.53 L802.26,604.26 L801.26,603.92 L800.53,603.79 L800.19,604.06 L799.83,604.33 L799.46,604.57 L799.08,604.80 L798.69,605.02 L798.30,605.21 L797.89,605.39 L797.48,605.55 L797.23,606.24 L797.02,607.28 L796.73,608.33 L796.29,609.00 L795.72,609.09 L795.15,609.15 L794.58,609.19 L794.00,609.20 L793.42,609.19 L792.85,609.15 L792.28,609.09 L791.71,609.00 L791.27,608.33 L790.98,607.28 L790.77,606.24 L790.52,605.55 L790.11,605.39 L789.70,605.21 L789.31,605.02 L788.92,604.80 L788.54,604.57 L788.17,604.33 L787.81,604.06 L787.47,603.79 L786.74,603.92 L785.74,604.26 L784.69,604.53 L783.89,604.48 L783.53,604.04 L783.19,603.57 L782.87,603.09 L782.57,602.60 L782.29,602.10 L782.04,601.58 L781.80,601.05 L781.60,600.51 L781.96,599.80 L782.72,599.02 L783.52,598.32 L783.99,597.76 L783.92,597.33 L783.87,596.89 L783.85,596.44 L783.84,596.00 L783.85,595.56 L783.87,595.11 L783.92,594.67 L783.99,594.24 L783.52,593.68 L782.72,592.98 L781.96,592.20 L781.60,591.49 L781.80,590.95 L782.04,590.42 L782.29,589.90 L782.57,589.40 L782.87,588.91 L783.19,588.43 L783.53,587.96 L783.89,587.52 L784.69,587.47 L785.74,587.74 L786.74,588.08 L787.47,588.21 L787.81,587.94 L788.17,587.67 L788.54,587.43 L788.92,587.20 L789.31,586.98 L789.70,586.79 L790.11,586.61 L790.52,586.45 L790.77,585.76 L790.98,584.72 L791.27,583.67 L791.71,583.00 L792.28,582.91 L792.85,582.85 L793.42,582.81Z" fill="none" stroke="#2b3437" stroke-width="3.0" stroke-linejoin="round"/><circle cx="794" cy="596" r="3.9599999999999995" fill="none" stroke="#2b3437" stroke-width="3.0"/><circle cx="601.6" cy="176.6" r="10.8" fill="none" stroke="#5a5a5a" stroke-width="2"/><path d="M599.3,173.2 H602.2 V181 M598.8,181.2 H605" fill="none" stroke="#5a5a5a" stroke-width="1.9"/><circle cx="601.6" cy="169.7" r="1.4" fill="#5a5a5a"/><path d="M721.1,205.6 A21.5,21.5 0 0 1 758.6,216.8" fill="none" stroke="#1cac49" stroke-width="4.6"/><polygon points="757.1,226.6 767.5,212.4 763.7,209.7 760.3,214.3 756.3,213.2 756.2,219" fill="#1cac49"/><g transform="rotate(180 737.3 219.75)"><path d="M721.1,205.6 A21.5,21.5 0 0 1 758.6,216.8" fill="none" stroke="#1cac49" stroke-width="4.6"/><polygon points="757.1,226.6 767.5,212.4 763.7,209.7 760.3,214.3 756.3,213.2 756.2,219" fill="#1cac49"/></g><path d="M111.5,292.0 L121.5,300.0 L131.5,292.0" fill="none" stroke="#8e8e8e" stroke-width="2.2" stroke-linecap="round" stroke-linejoin="round"/><path d="M461.5,292.0 L471.5,300.0 L481.5,292.0" fill="none" stroke="#8e8e8e" stroke-width="2.2" stroke-linecap="round" stroke-linejoin="round"/><path d="M185.5,490.2 L195.5,498.2 L205.5,490.2" fill="none" stroke="#8e8e8e" stroke-width="2.2" stroke-linecap="round" stroke-linejoin="round"/><path d="M529.5,490.2 L539.5,498.2 L549.5,490.2" fill="none" stroke="#8e8e8e" stroke-width="2.2" stroke-linecap="round" stroke-linejoin="round"/><g fill="none" stroke-linecap="round" transform="translate(0.8,0)"><path d="M30.5,581.8 Q29,581.5 28,583.5 Q22.8,595 28,606.5 Q29,608.6 30.5,608.2" stroke="#5f6466" stroke-width="1.9"/><path d="M37.5,583.8 Q35.8,583.4 34.8,585.2 Q30,595 34.8,604.8 Q35.8,606.6 37.5,606.2" stroke="#1cac49" stroke-width="2.5"/><path d="M43.5,584.3 Q41.8,583.9 40.8,585.7 Q36.5,595 40.8,604.3 Q41.8,606.1 43.5,605.7" stroke="#1cac49" stroke-width="2.5"/><ellipse cx="48.5" cy="595" rx="3.8" ry="13.3" stroke="#5f6466" stroke-width="1.9"/></g><path d="M610,596 H634 M622,584 V608 M666,596 H690" stroke="#2b3437" stroke-width="2.6" fill="none"/><g fill="none" stroke="#2b3437" stroke-width="2.1" stroke-linejoin="round"><path d="M723,594 V584.5 Q723,582.5 725,582.5 H744.5 Q746.5,582.5 746.5,584.5 V590"/><path d="M728,583 V593 M733,583 V593 M738,583 V593 M743,583 V590"/><path d="M734,608 H721.5 Q719.5,608 719.5,606 V596 Q719.5,594 721.5,594 H737"/></g><circle cx="742.5" cy="601.5" r="9.6" fill="#f1f1f1" stroke="#2b3437" stroke-width="2"/><path d="M737,599 H747.5 L745,596.6 M748,604 H737.5 L740,606.4" fill="none" stroke="#2b3437" stroke-width="1.7" stroke-linejoin="round"/><g fill="none" stroke-width="2.3" stroke-linejoin="round" stroke-linecap="round"><path d="M33.3,647.7 H53.5 L43.5,657.7 H23.8 Z" stroke="#5f6466"/><path d="M25,664.5 H43.5 L52.4,656 M27.6,661.8 L24.6,664.5 L27.6,667 M49,655.4 L52.6,655.8 L52.8,659.2" stroke="#1cac49" stroke-width="2.5"/><path d="M25,672.2 H43.5 L53,663.6 M27.4,669.8 L24.6,672.2 M50,663.2 L53.2,663.4" stroke="#5f6466"/></g><path d="M732.5,650.5 H751.5 M732.5,660 H751.5 M732.5,669.5 H751.5" stroke="#2b3437" stroke-width="2.5" fill="none" stroke-linecap="round"/><circle cx="725.8" cy="650.5" r="1.7" fill="#2b3437"/><circle cx="725.8" cy="660" r="1.7" fill="#2b3437"/><circle cx="725.8" cy="669.5" r="1.7" fill="#2b3437"/><g fill="none" stroke="#2b3437" stroke-width="2.3" stroke-linecap="round" stroke-linejoin="round"><path d="M782,673 L805.5,648.5"/><path d="M780,653 H794.5 M788,646.5 L794.5,653 L788,659.5"/><path d="M808,667.5 H794.5 M801,661 L794.5,667.5 L801,674"/></g><circle cx="29.2" cy="713" r="9.6" fill="none" stroke="#222" stroke-width="2.8"/><path d="M36.3,720.3 L42,726.2" stroke="#222" stroke-width="3.2" stroke-linecap="round"/><path d="M30.5,822.5 L38.0,830.5 L45.5,822.5" fill="none" stroke="#7a7a7a" stroke-width="2.8" stroke-linecap="round" stroke-linejoin="round"/><path d="M553,874.8 L562,880.5 L571,870" fill="none" stroke="#fff" stroke-width="2.2" stroke-linejoin="round" stroke-linecap="round"/><path d="M553,922.8 L562,928.5 L571,918" fill="none" stroke="#fff" stroke-width="2.2" stroke-linejoin="round" stroke-linecap="round"/><path d="M553,970.8 L562,976.5 L571,966" fill="none" stroke="#fff" stroke-width="2.2" stroke-linejoin="round" stroke-linecap="round"/><path d="M553,1018.8 L562,1024.5 L571,1014" fill="none" stroke="#fff" stroke-width="2.2" stroke-linejoin="round" stroke-linecap="round"/><path d="M673,864.5 V886.0 H669 V869.7 L665.2,873.1 L663,870.3 L669.6,864.5 Z" fill="#fff"/><path d="M673,912.5 V934.0 H669 V917.7 L665.2,921.1 L663,918.3 L669.6,912.5 Z" fill="#fff"/><path d="M673,960.5 V982.0 H669 V965.7 L665.2,969.1 L663,966.3 L669.6,960.5 Z" fill="#fff"/><path d="M673,1008.5 V1030.0 H669 V1013.7 L665.2,1017.1 L663,1014.3 L669.6,1008.5 Z" fill="#fff"/><rect x="508" y="1250.5" width="27.5" height="18.5" fill="#fff" stroke="#ececec" stroke-width="1"/><rect x="508" y="1274.5" width="27.5" height="18.5" fill="#fff" stroke="#ececec" stroke-width="1"/><path d="M508,1272 H532.5" stroke="#d8d8d8" stroke-width="1.2"/><path d="M514.0,1262.8 L521.3,1255.8 L528.5,1262.8" fill="none" stroke="#b4b4b4" stroke-width="2" stroke-linecap="round" stroke-linejoin="round"/><path d="M514.0,1280.0 L521.3,1287.0 L528.5,1280.0" fill="none" stroke="#b4b4b4" stroke-width="2" stroke-linecap="round" stroke-linejoin="round"/><g><path d="M174.5,178 L236,178 L257,180.5 L257,251 L236,255 L174.5,253 Z" fill="#2f3031"/><path d="M236,178 L257,180.5 L257,251 L236,255 Z" fill="#3a3b3c"/><rect x="174.5" y="176" width="61" height="6" fill="#2a2b2c"/><rect x="178" y="188.5" width="52" height="60" fill="#0b0b0c"/><rect x="212" y="190" width="8" height="8" fill="#8a8f93"/><rect x="224" y="214" width="7" height="4" fill="#9a9a9a"/><rect x="185" y="233.5" width="41" height="2.5" fill="#6a6a6a"/><rect x="246.5" y="204" width="3.5" height="13" fill="#111"/><rect x="180" y="178" width="20" height="3" fill="#4a5a60"/></g><g><rect x="496" y="176" width="84" height="88" fill="#c9a467"/><rect x="528" y="174" width="20" height="3" fill="#c9a467"/><rect x="520" y="262" width="60" height="3.5" fill="#c4a778"/><path d="M496,176 H580 V264 H496 Z" fill="url(#pg)"/><rect x="526.5" y="204" width="22" height="31" fill="none" stroke="#d6b988" stroke-width="0.9"/><path d="M537.5,204 V235" stroke="#d6b988" stroke-width="0.9"/></g>
<path d="M908.5,201 L901.5,208.5 L909.5,215 M902.5,208.5 H920 A10.2,10.2 0 0 1 920,229.5 H914" fill="none" stroke="#e9e9ea" stroke-width="2.8" stroke-linejoin="round" stroke-linecap="round"/><path d="M1852,213 L1858.5,219 L1867.5,207.5" fill="none" stroke="#fff" stroke-width="2.6"/><path d="M1446.5,325 L1668,185" stroke="#fb2c1c" stroke-width="5.6" fill="none"/><polygon points="1688.5,171.5 1656.5,175 1672.5,199.5" fill="#fb2c1c"/><path d="M2210.5,505.5 Q2210.0,501.5 2214.0,501.5 L2261.5,501.5 Q2265.5,501.5 2266.1,505.5 L2270.4,533.5 Q2271.0,537.5 2267.0,537.5 L2218.5,537.5 Q2214.5,537.5 2214.0,533.5Z" fill="#e3e3e3" stroke="#6d6d6d" stroke-width="2.6"/><path d="M2217.5,558.0 Q2217.0,554.0 2221.0,554.0 L2268.5,554.0 Q2272.5,554.0 2273.2,557.9 L2278.3,588.1 Q2279.0,592.0 2275.0,592.0 L2226.0,592.0 Q2222.0,592.0 2221.5,588.0Z" fill="#e3e3e3" stroke="#6d6d6d" stroke-width="2.6"/><path d="M2224.6,612.0 Q2224.0,608.0 2228.0,608.0 L2277.0,608.0 Q2281.0,608.0 2281.6,612.0 L2286.4,643.0 Q2287.0,647.0 2283.0,647.0 L2233.5,647.0 Q2229.5,647.0 2228.9,643.0Z" fill="#e3e3e3" stroke="#6d6d6d" stroke-width="2.6"/><path d="M2231.5,667.5 Q2231.0,663.5 2235.0,663.5 L2285.0,663.5 Q2289.0,663.5 2289.6,667.5 L2294.4,700.0 Q2295.0,704.0 2291.0,704.0 L2240.5,704.0 Q2236.5,704.0 2236.0,700.0Z" fill="#e3e3e3" stroke="#6d6d6d" stroke-width="2.6"/><path d="M2237.5,723.5 Q2237.0,719.5 2241.0,719.5 L2294.0,719.5 Q2298.0,719.5 2298.5,723.5 L2303.5,759.5 Q2304.0,763.5 2300.0,763.5 L2247.0,763.5 Q2243.0,763.5 2242.5,759.5Z" fill="#e3e3e3" stroke="#6d6d6d" stroke-width="2.6"/><path d="M2224.5,508.5 L2259.5,530 M2258,508.5 L2225.5,530.5" stroke="#565656" stroke-width="3" stroke-linecap="round"/><g fill="none" stroke="#565656" stroke-width="1.8" stroke-linejoin="round"><path d="M2247,559.5 L2270,563.5 L2265.5,578.5 L2242.5,573.5 Z"/><rect x="2230" y="583.5" width="42" height="4" rx="2"/><path d="M2226.5,574.5 L2236,572 L2230.5,580.5 Z M2237,568 L2229,573" stroke-width="2.2"/></g><text x="2222.5" y="568" font-family="Liberation Sans,sans-serif" font-weight="bold" font-size="6" fill="#888" textLength="17" lengthAdjust="spacingAndGlyphs">AUTO</text><g fill="none" stroke="#565656" stroke-width="2"><path d="M2231,613.5 L2272.5,613.5 L2273.5,620.5 L2232,620.5 Z"/><path d="M2234,626.5 L2243,626.5 L2245,641.5 L2236,641.5 Z"/><path d="M2252,626 L2274.5,626 L2275.3,631 L2252.7,631 Z"/><path d="M2253.5,636.5 L2276,636.5 L2276.8,641.5 L2254.2,641.5 Z"/></g><path d="M2250.5,683 H2276.5 Q2278.5,683 2278.7,685 L2279.3,694.5 Q2279.3,696.5 2277.3,696.5 H2251.5 Q2249.5,696.5 2249.3,694.5 L2248.5,685 Q2248.5,683 2250.5,683 Z" fill="#565656"/><path d="M2253,677.5 V676.5 Q2253.5,672.3 2263.3,672.3 Q2273,672.3 2273.8,677 L2274.3,683.5" fill="none" stroke="#565656" stroke-width="3.8"/><path d="M2248.5,742 L2259.5,728.5 L2282,728.5 L2291.5,742 L2282.5,755 L2260.5,755 Z" fill="#d0d0d0" stroke="#565656" stroke-width="2.6" stroke-linejoin="round"/><ellipse cx="2270.4" cy="741.7" rx="8.4" ry="5.2" fill="#e6e6e6" stroke="#565656" stroke-width="2.6"/><path d="M922,1563 V1474" stroke="#8484c8" stroke-width="2.4"/><polygon points="922,1466.5 916,1478.5 928,1478.5" fill="#8484c8"/><path d="M922,1563 H1045" stroke="#c87676" stroke-width="2.4"/><polygon points="1056,1563 1044,1557.3 1044,1568.7" fill="#c87676"/><g fill="none" stroke="#686868" stroke-width="3.6" stroke-linecap="round" stroke-linejoin="round"><path d="M1148.3,1527.1 V1523.6 Q1148.3,1518.6 1153.3,1518.6 H1156.8 M1177.8,1518.6 H1181.3 Q1186.3,1518.6 1186.3,1523.6 V1527.1 M1186.3,1548.1 V1551.6 Q1186.3,1556.6 1181.3,1556.6 H1177.8 M1156.8,1556.6 H1153.3 Q1148.3,1556.6 1148.3,1551.6 V1548.1"/><path d="M1167.3,1524.6 L1178.3,1531.1 V1544.1 L1167.3,1550.6 L1156.3,1544.1 V1531.1 Z M1156.3,1531.1 L1167.3,1537.6 L1178.3,1531.1 M1167.3,1537.6 V1550.6" stroke-width="3.2"/></g><path d="M2484.5,1454 L2512.5,1482 M2512.5,1454 L2484.5,1482" stroke="#9a9898" stroke-width="2.6" stroke-linecap="round"/><path d="M2501.5,1558.7 H2517.5" stroke="#d4d2d2" stroke-width="2"/>
</svg>
<div class="t" style="left:197.03px;top:21.45px;font-size:29px;line-height:29px;color:#fff;font-weight:normal;-webkit-text-stroke:0.35px #fff;transform:scaleX(0.9846)">Prepare</div>
<div class="t" style="left:469.06px;top:21.45px;font-size:29px;line-height:29px;color:#fff;font-weight:normal;-webkit-text-stroke:0.35px #fff;transform:scaleX(0.9687)">Preview</div>
<div class="t" style="left:747.00px;top:21.45px;font-size:29px;line-height:29px;color:#fff;font-weight:normal;-webkit-text-stroke:0.35px #fff;transform:scaleX(0.9998)">Device</div>
<div class="t" style="left:1016.98px;top:21.45px;font-size:29px;line-height:29px;color:#fff;font-weight:normal;-webkit-text-stroke:0.35px #fff;transform:scaleX(1.0091)">Project</div>
<div class="t" style="left:1265.99px;top:21.45px;font-size:29px;line-height:29px;color:#fff;font-weight:normal;-webkit-text-stroke:0.35px #fff;transform:scaleX(1.0073)">Calibration</div>
<div class="t" style="left:2006.00px;top:19.45px;font-size:29px;line-height:29px;color:#fff;font-weight:normal;-webkit-text-stroke:0.7px #fff;transform:scaleX(1.0025)">Slice plate</div>
<div class="t" style="left:2297.47px;top:19.45px;font-size:29px;line-height:29px;color:#a9a9a9;font-weight:normal;-webkit-text-stroke:0.7px #a9a9a9;transform:scaleX(1.0161)">Print plate</div>
<div class="t" style="left:77.39px;top:90.05px;font-size:28px;line-height:28px;color:#2b3437;font-weight:normal;-webkit-text-stroke:0.25px #2b3437;transform:scaleX(1.0543)">Printer</div>
<div class="t" style="left:143.02px;top:284.30px;font-size:28px;line-height:28px;color:#1f2a2e;font-weight:normal;-webkit-text-stroke:0.25px #1f2a2e;transform:scaleX(0.9914)">Bambu Lab P1S</div>
<div class="t" style="left:496.00px;top:284.30px;font-size:28px;line-height:28px;color:#1f2a2e;font-weight:normal;-webkit-text-stroke:0.25px #1f2a2e;transform:scaleX(1.0231)">Texture...</div>
<div class="t" style="left:678.00px;top:263.45px;font-size:29px;line-height:29px;color:#111;font-weight:normal;-webkit-text-stroke:0.25px #111;transform:scaleX(1.0029)">Sync info</div>
<div class="t" style="left:42.96px;top:413.14px;font-size:27px;line-height:27px;color:#7b7b7b;font-weight:normal;-webkit-text-stroke:0.25px #7b7b7b;transform:scaleX(1.0187)">Nozzle</div>
<div class="t" style="left:42.93px;top:481.80px;font-size:28px;line-height:28px;color:#2b3437;font-weight:normal;-webkit-text-stroke:0.25px #2b3437;transform:scaleX(1.0336)">Diameter</div>
<div class="t" style="left:218.48px;top:481.80px;font-size:28px;line-height:28px;color:#2b3437;font-weight:normal;-webkit-text-stroke:0.25px #2b3437;transform:scaleX(1.0174)">0.4</div>
<div class="t" style="left:445.53px;top:481.80px;font-size:28px;line-height:28px;color:#2b3437;font-weight:normal;-webkit-text-stroke:0.25px #2b3437;transform:scaleX(0.9845)">Flow</div>
<div class="t" style="left:561.96px;top:481.80px;font-size:28px;line-height:28px;color:#2b3437;font-weight:normal;-webkit-text-stroke:0.25px #2b3437;transform:scaleX(1.0399)">Standard</div>
<div class="t" style="left:77.43px;top:581.80px;font-size:28px;line-height:28px;color:#2b3437;font-weight:normal;-webkit-text-stroke:0.25px #2b3437;transform:scaleX(1.0338)">Project Filaments</div>
<div class="t" style="left:405.98px;top:583.72px;font-size:21px;line-height:21px;color:#6b6b6b;font-weight:normal;-webkit-text-stroke:0.25px #6b6b6b;transform:scaleX(1.0191)">Flushing volumes</div>
<div class="t" style="left:77.45px;top:645.80px;font-size:28px;line-height:28px;color:#2b3437;font-weight:normal;-webkit-text-stroke:0.25px #2b3437;transform:scaleX(1.0240)">Process</div>
<div class="t" style="left:220.53px;top:649.18px;font-size:24px;line-height:24px;color:#6b6b6b;font-weight:normal;-webkit-text-stroke:0.25px #6b6b6b;transform:scaleX(0.9695)">Global</div>
<div class="t" style="left:310.00px;top:649.18px;font-size:24px;line-height:24px;color:#fff;font-weight:normal;-webkit-text-stroke:0.25px #fff;transform:scaleX(0.9955)">Objects</div>
<div class="t" style="left:509.00px;top:645.80px;font-size:28px;line-height:28px;color:#2b3437;font-weight:normal;-webkit-text-stroke:0.25px #2b3437;transform:scaleX(1.0247)">Advanced</div>
<div class="t" style="left:57.98px;top:701.14px;font-size:27px;line-height:27px;color:#bdbdbd;font-weight:normal;transform:scaleX(1.0165)">Search plate, object and part.</div>
<div class="t" style="left:55.48px;top:751.99px;font-size:26px;line-height:26px;color:#1f1f1f;font-weight:normal;-webkit-text-stroke:0.25px #1f1f1f;transform:scaleX(1.0091)">Name</div>
<div class="t" style="left:650.41px;top:751.99px;font-size:26px;line-height:26px;color:#1f1f1f;font-weight:normal;-webkit-text-stroke:0.25px #1f1f1f;transform:scaleX(1.0469)">Fila.</div>
<div class="t" style="left:51.54px;top:813.49px;font-size:26px;line-height:26px;color:#222;font-weight:normal;-webkit-text-stroke:0.25px #222;transform:scaleX(0.9811)">Plate 1</div>
<div class="t" style="left:67.90px;top:861.49px;font-size:26px;line-height:26px;color:#222;font-weight:normal;-webkit-text-stroke:0.25px #222;transform:scaleX(1.0978)">hiwi-skwh-s.stl</div>
<div class="t" style="left:67.90px;top:909.49px;font-size:26px;line-height:26px;color:#222;font-weight:normal;-webkit-text-stroke:0.25px #222;transform:scaleX(1.1008)">hiwi-skwh-k.stl</div>
<div class="t" style="left:67.91px;top:957.49px;font-size:26px;line-height:26px;color:#222;font-weight:normal;-webkit-text-stroke:0.25px #222;transform:scaleX(1.0933)">hiwi-skwh-w.stl</div>
<div class="t" style="left:67.90px;top:1005.49px;font-size:26px;line-height:26px;color:#222;font-weight:normal;-webkit-text-stroke:0.25px #222;transform:scaleX(1.1002)">hiwi-skwh-h.stl</div>
<div class="t" style="left:29.97px;top:1060.30px;font-size:28px;line-height:28px;color:#222;font-weight:bold;transform:scaleX(1.0341)">Frequent</div>
<div class="t" style="left:189.97px;top:1060.30px;font-size:28px;line-height:28px;color:#6b6b6b;font-weight:normal;-webkit-text-stroke:0.25px #6b6b6b;transform:scaleX(1.0273)">Quality</div>
<div class="t" style="left:315.93px;top:1060.30px;font-size:28px;line-height:28px;color:#6b6b6b;font-weight:normal;-webkit-text-stroke:0.25px #6b6b6b;transform:scaleX(1.0651)">Strength</div>
<div class="t" style="left:463.97px;top:1060.30px;font-size:28px;line-height:28px;color:#6b6b6b;font-weight:normal;-webkit-text-stroke:0.25px #6b6b6b;transform:scaleX(1.0269)">Speed</div>
<div class="t" style="left:581.95px;top:1060.30px;font-size:28px;line-height:28px;color:#6b6b6b;font-weight:normal;-webkit-text-stroke:0.25px #6b6b6b;transform:scaleX(1.0484)">Support</div>
<div class="t" style="left:723.96px;top:1060.30px;font-size:28px;line-height:28px;color:#6b6b6b;font-weight:normal;-webkit-text-stroke:0.25px #6b6b6b;transform:scaleX(1.0423)">Others</div>
<div class="t" style="left:60.93px;top:1149.80px;font-size:28px;line-height:28px;color:#222;font-weight:normal;-webkit-text-stroke:0.25px #222;transform:scaleX(1.0339)">Layer height</div>
<div class="t" style="left:61.96px;top:1205.80px;font-size:28px;line-height:28px;color:#222;font-weight:normal;-webkit-text-stroke:0.25px #222;transform:scaleX(1.0386)">Sparse infill density</div>
<div class="t" style="left:63.00px;top:1261.80px;font-size:28px;line-height:28px;color:#222;font-weight:normal;-webkit-text-stroke:0.25px #222;transform:scaleX(1.0227)">Wall loops</div>
<div class="t" style="left:60.93px;top:1317.80px;font-size:28px;line-height:28px;color:#222;font-weight:normal;-webkit-text-stroke:0.25px #222;transform:scaleX(1.0344)">Enable support</div>
<div class="t" style="left:515.98px;top:1147.80px;font-size:28px;line-height:28px;color:#222;font-weight:normal;-webkit-text-stroke:0.25px #222;transform:scaleX(1.0174)">0.2</div>
<div class="t" style="left:513.97px;top:1203.80px;font-size:28px;line-height:28px;color:#222;font-weight:normal;-webkit-text-stroke:0.25px #222;transform:scaleX(1.0150)">15</div>
<div class="t" style="left:545.96px;top:1258.80px;font-size:28px;line-height:28px;color:#222;font-weight:normal;-webkit-text-stroke:0.25px #222;transform:scaleX(1.0357)">2</div>
<div class="t" style="left:679.33px;top:1155.38px;font-size:22px;line-height:22px;color:#555;font-weight:normal;-webkit-text-stroke:0.25px #555;transform:scaleX(1.1653)">mm</div>
<div class="t" style="left:701.00px;top:1211.38px;font-size:22px;line-height:22px;color:#555;font-weight:normal;-webkit-text-stroke:0.25px #555;transform:scaleX(1.0526)">%</div>
<div class="t" style="left:941.48px;top:199.64px;font-size:27px;line-height:27px;color:#fff;font-weight:normal;-webkit-text-stroke:0.25px #fff;transform:scaleX(1.0217)">return</div>
<div class="t" style="left:1749.07px;top:198.14px;font-size:27px;line-height:27px;color:#2d3a3f;font-weight:normal;-webkit-text-stroke:0.25px #2d3a3f;transform:scaleX(0.9645)">Mode:</div>
<div class="t" style="left:1884.05px;top:197.14px;font-size:27px;line-height:27px;color:#2d3a3f;font-weight:normal;-webkit-text-stroke:0.25px #2d3a3f;transform:scaleX(0.9491)">Convex hull</div>
<div class="t" style="left:2080.00px;top:197.14px;font-size:27px;line-height:27px;color:#2d3a3f;font-weight:normal;-webkit-text-stroke:0.25px #2d3a3f;transform:scaleX(0.9862)">Triangular facet</div>
<div class="t" style="left:1820.00px;top:1446.14px;font-size:27px;line-height:27px;color:#2b2b2b;font-weight:normal;-webkit-text-stroke:0.25px #2b2b2b;transform:scaleX(0.9968)">Object name: hiwi-skwh-h.stl</div>
<div class="t" style="left:1820.06px;top:1476.14px;font-size:27px;line-height:27px;color:#2b2b2b;font-weight:normal;-webkit-text-stroke:0.25px #2b2b2b;transform:scaleX(0.9415)">Size: 27 x 54 x 4 mm</div>
<div class="t" style="left:1821.00px;top:1505.64px;font-size:27px;line-height:27px;color:#2b2b2b;font-weight:normal;-webkit-text-stroke:0.25px #2b2b2b;transform:scaleX(0.9659)">Volume: 2272.35 mm</div>
<div class="t" style="left:1821.00px;top:1535.84px;font-size:27px;line-height:27px;color:#2b2b2b;font-weight:normal;-webkit-text-stroke:0.25px #2b2b2b;transform:scaleX(0.9552)">Triangles: 556</div>
<div class="t" style="left:963.00px;top:1415.56px;font-size:20.6px;line-height:20.6px;color:#444;font-weight:normal;-webkit-text-stroke:0.25px #444;transform:scaleX(1.3557)">Top</div>
<div class="t" style="left:953.89px;top:1505.96px;font-size:20.6px;line-height:20.6px;color:#444;font-weight:normal;-webkit-text-stroke:0.25px #444;transform:scaleX(1.3053)">Front</div>
<div class="t" style="left:916.00px;top:1437.76px;font-size:18px;line-height:18px;color:#8686cc;font-weight:normal;-webkit-text-stroke:0.25px #8686cc;transform:scaleX(0.9455)">Z</div>
<div class="t" style="left:1081.70px;top:1554.07px;font-size:20px;line-height:20px;color:#cc7474;font-weight:normal;-webkit-text-stroke:0.25px #cc7474;transform:scaleX(0.9308)">X</div>
<div class="t" style="left:2067px;top:1502px;font-size:16px;line-height:16px;color:#2b2b2b">3</div>
<div style="left:1736px;top:176px;width:212px;height:64px;background:rgba(29,29,31,0.8)"></div>
<div class="t" style="left:1750.06px;top:193.64px;font-size:27px;line-height:27px;color:#fff;font-weight:normal;-webkit-text-stroke:0.25px #fff;transform:scaleX(0.9696)">Lay on Face [F]</div>
</div></body></html>
